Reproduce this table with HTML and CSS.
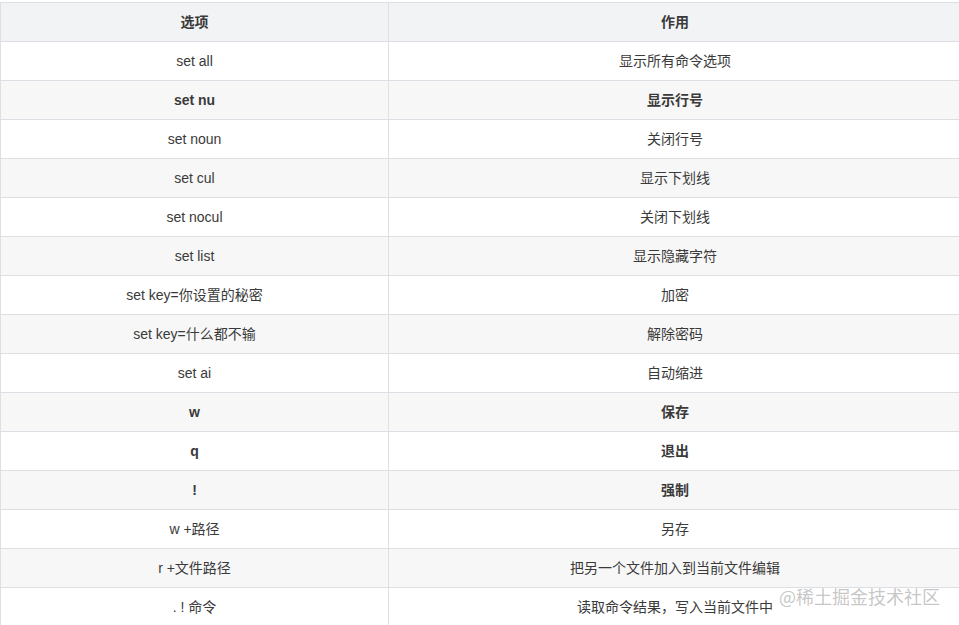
FILE: index.html
```html
<!DOCTYPE html>
<html lang="zh">
<head>
<meta charset="utf-8">
<link rel="stylesheet" href="styles.css">
</head>
<body>
<div class="page">
<table class="opts">
<thead>
<tr><th class="c1">选项</th><th>作用</th></tr>
</thead>
<tbody>
<tr><td>set all</td><td>显示所有命令选项</td></tr>
<tr class="b"><td>set nu</td><td>显示行号</td></tr>
<tr><td>set noun</td><td>关闭行号</td></tr>
<tr><td>set cul</td><td>显示下划线</td></tr>
<tr><td>set nocul</td><td>关闭下划线</td></tr>
<tr><td>set list</td><td>显示隐藏字符</td></tr>
<tr><td>set key=你设置的秘密</td><td>加密</td></tr>
<tr><td>set key=什么都不输</td><td>解除密码</td></tr>
<tr><td>set ai</td><td>自动缩进</td></tr>
<tr class="b"><td>w</td><td>保存</td></tr>
<tr class="b"><td>q</td><td>退出</td></tr>
<tr class="b"><td>!</td><td>强制</td></tr>
<tr><td>w +路径</td><td>另存</td></tr>
<tr><td>r +文件路径</td><td>把另一个文件加入到当前文件编辑</td></tr>
<tr><td>. ! 命令</td><td>读取命令结果，写入当前文件中</td></tr>
</tbody>
</table>
<div class="mark">@稀土掘金技术社区</div>
</div>
</body>
</html>
```
FILE: styles.css
```css
html, body {
  margin: 0;
  padding: 0;
  background: #fff;
  overflow: hidden;
}
.page {
  position: relative;
  width: 959px;
  height: 625px;
  overflow: hidden;
  padding-top: 2px;
  box-sizing: border-box;
  font-family: "Liberation Sans", Arial, "Noto Sans CJK SC", sans-serif;
  font-size: 14px;
  color: #3a3a3a;
}
.opts {
  border-collapse: collapse;
  width: 962px;
  table-layout: fixed;
}
.opts th, .opts td {
  border: 1px solid #dcdfe3;
  height: 39px;
  padding: 0 8px;
  box-sizing: border-box;
  text-align: center;
  vertical-align: middle;
  line-height: 20px;
}
.opts th.c1 { width: 388px; }
.opts th {
  background: #f2f3f4;
  font-weight: bold;
  height: 39px;
}
.opts tbody tr:nth-child(even) { background: #f7f7f7; }
.opts tr.b td { font-weight: bold; }
.mark {
  position: absolute;
  left: 779px;
  top: 583px;
  font-family: "Noto Sans CJK SC", sans-serif;
  font-size: 18px;
  color: rgba(150, 150, 150, 0.55);
}
```
